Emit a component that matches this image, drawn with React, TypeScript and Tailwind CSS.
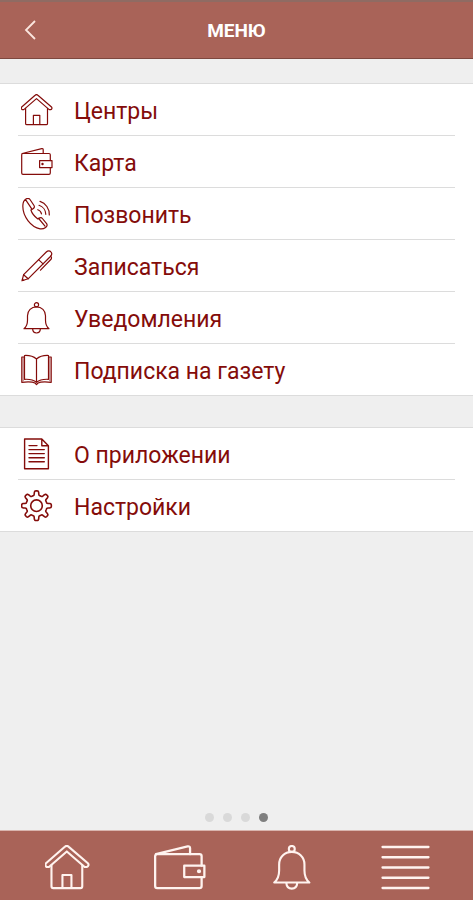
import type { ReactNode } from 'react';

type IconProps = { className?: string };

function Icon({ className = 'size-8 stroke-[1.2]', children }: IconProps & { children: ReactNode }) {
  return (
    <svg
      viewBox="0 0 32 32"
      fill="none"
      stroke="currentColor"
      strokeLinecap="round"
      strokeLinejoin="round"
      aria-hidden="true"
      className={className}
    >
      {children}
    </svg>
  );
}

function HouseIcon({ className }: IconProps) {
  return (
    <Icon className={className}>
      <path d="M14.1 1.3a2 2 0 0 1 2.8 0L30.5 13c.8.8.5 2.3-.7 2.6h-1.6L15.5 4.6 2.8 15.6H1.2C.1 15.1 0 13.8.7 13z" />
      <path d="M4.6 14.4v15c0 .8.5 1.3 1.3 1.3h19.3c.8 0 1.3-.5 1.3-1.3v-15M12.4 30.6v-9.3h6.4v9.3" />
    </Icon>
  );
}

function WalletIcon({ className, claspX = 21.5 }: IconProps & { claspX?: number }) {
  return (
    <Icon className={className}>
      <path d="M29.3 14.6V8.8c0-.8-.5-1.3-1.3-1.3H2c-.8 0-1.3.5-1.3 1.3v18.3c0 .8.5 1.3 1.3 1.3h26c.8 0 1.3-.5 1.3-1.3v-5.3" />
      <path d="M1.2 7.5 20.7 2.7c.9-.2 1.5.2 1.5 1.1v3.7" />
      <path d="M18.6 14.6H31v7H18.6z" />
      <circle cx={claspX} cy="18" r=".6" fill="currentColor" />
    </Icon>
  );
}

function PhoneIcon() {
  return (
    <Icon>
      <path d="M5 .9C6.5.1 8 .1 9 1.5l4 6c.8 1.2.3 2.5-.9 3.2L9.9 12c1.1 3.6 3.6 6.5 6.9 8.9l2-1c1-.5 1.9-.3 2.6.6l4.2 5.2c1 1.4.3 2.8-1 3.7-1.8 1.3-3.5 1.7-5.5 1.4-4.5-.8-8.5-3.5-12-8C3.3 17.8 1.5 12.5 1.9 7 2 4.2 2.8 2.2 5 .9z" />
      <path d="m3.6 2.3 1.3-.2 6 9M17.7 20.5l6.3 7.7" />
      <path d="M19 3.3c5.7 1.6 9.6 7.6 9.3 13.7M18 7.3c4 1.2 6.7 5 6.8 9M16.8 11.7c2 .6 3.3 2.2 3.7 4.2" />
    </Icon>
  );
}

function PenIcon() {
  return (
    <Icon>
      <path d="M1 30.8 2.6 24.7 25.3 2c1.7-1.7 3.5-1.5 4.6-.2 1.2 1.3 1.1 3-.5 4.7L7.1 28.8z" />
      <path d="m2.6 24.7 4.5 4.1M17.5 9.6l4.6 4.3M29.6 6.2c1.2.9 1.2 2.3.2 3.3L19.5 20.2" />
      <path d="m1.4 29.2 1.3 1.2" />
    </Icon>
  );
}

function BellIcon({ className }: IconProps) {
  return (
    <Icon className={className}>
      <circle cx="15.5" cy="2.8" r="2.1" />
      <path d="M3 26.7c2.5-2 3.5-5 3.5-8.5v-4.4c0-5.1 3.8-8.9 9-8.9s9 3.8 9 8.9v4.4c0 3.5 1 6.5 3.5 8.5zM11.6 26.9c.2 2.6 1.8 4.1 3.9 4.1s3.7-1.5 3.9-4.1" />
    </Icon>
  );
}

function BookIcon() {
  return (
    <Icon>
      <path d="M15.5 5C12.5 2.4 8 1.3 3.5 1.5v23.8c4.8-.3 9 .5 12 3 3-2.5 7.200-3.3 12-3V1.5c-4.500-.2-9 .9-12 3.5zv23.3" />
      <path d="M3.500 3H.8v25.300c5.300-.5 10.200-.8 13.200.7l1.500 1.600 1.500-1.600c3-1.500 7.900-1.200 13.200-.7V3h-2.700" />
      <path d="M2.200 3.500v23.400M28.800 3.500v23.400" className="stroke-[0.6]" />
    </Icon>
  );
}

function DocumentIcon() {
  return (
    <Icon className="size-8 stroke-[1.4]">
      <path d="M3.6 1h17.2l6.600 6.8v22.9H3.6zM20.800 1v6.8h6.600" />
      <path d="M8 7.600h8M8 11.600h15.300M8 15.600h15.300M8 19.700h15.300M8 23.700h15.300" />
    </Icon>
  );
}

// Eight rounded teeth, traced around the hub
const gearPoints = Array.from({ length: 160 }, (_, i) => {
  const angle = (i / 160) * Math.PI * 2;
  const radius = 12.7 + 2.2 * Math.tanh(2.8 * (Math.cos(8 * angle) - 0.15));
  return `${(15.5 + radius * Math.cos(angle)).toFixed(2)},${(15.7 + radius * Math.sin(angle)).toFixed(2)}`;
}).join(' ');

function GearIcon() {
  return (
    <Icon className="size-8 stroke-[1.6]">
      <polygon points={gearPoints} />
      <circle cx="15.5" cy="15.7" r="5.8" />
    </Icon>
  );
}

function LinesIcon({ className }: IconProps) {
  return (
    <Icon className={className}>
      <path d="M1 2.6h30M1 9.3h30M1 16h30M1 22.7h30M1 29.4h30" />
    </Icon>
  );
}

const sections = [
  [
    { label: 'Центры', icon: <HouseIcon /> },
    { label: 'Карта', icon: <WalletIcon /> },
    { label: 'Позвонить', icon: <PhoneIcon /> },
    { label: 'Записаться', icon: <PenIcon /> },
    { label: 'Уведомления', icon: <BellIcon /> },
    { label: 'Подписка на газету', icon: <BookIcon /> },
  ],
  [
    { label: 'О приложении', icon: <DocumentIcon /> },
    { label: 'Настройки', icon: <GearIcon /> },
  ],
];

const tabs = [
  { label: 'Центры', icon: <HouseIcon className="size-[45px] stroke-[1.5]" /> },
  { label: 'Карта', icon: <WalletIcon className="size-[52px] stroke-[1.4]" claspX={27.7} /> },
  { label: 'Уведомления', icon: <BellIcon className="size-[45px] stroke-[1.5]" /> },
  { label: 'Меню', icon: <LinesIcon className="size-[49px] stroke-[1.5]" /> },
];

export default function App() {
  return (
    <div className="flex min-h-screen flex-col bg-[#efefef] font-['Roboto',sans-serif]">
      <header className="grid h-[59px] grid-cols-[1fr_auto_1fr] items-center border-t-2 border-b border-t-[#8f6b63] border-b-[#7d483f] bg-[#a96358] text-white">
        <button type="button" aria-label="Назад" className="ml-5 flex size-8 items-center">
          <svg viewBox="0 0 22 22" fill="none" stroke="#fbe6df" strokeWidth="1.8" aria-hidden="true" className="size-[22px]">
            <path d="M15 2 6 11l9 9" />
          </svg>
        </button>
        <h1 className="pt-0.5 text-[19px] leading-6 font-bold">МЕНЮ</h1>
      </header>

      <main className="flex flex-1 flex-col gap-[31px] pt-6">
        {sections.map((items, index) => (
          <ul key={index} className="border-y border-[#dcdcdc] bg-white text-[#840c0a]">
            {items.map(({ label, icon }) => (
              <li key={label} className="group px-[18px]">
                <a
                  href="#"
                  className="flex h-[52px] items-center gap-[21px] border-b border-[#dcdcdc] pl-[3px] group-last:h-[51px] group-last:border-b-0"
                >
                  {icon}
                  <span className="pt-1 text-[23px] leading-7">{label}</span>
                </a>
              </li>
            ))}
          </ul>
        ))}
      </main>

      <div className="flex justify-center gap-[9px] py-2">
        <span className="size-[9px] rounded-full bg-[#d9d9d9]" />
        <span className="size-[9px] rounded-full bg-[#d9d9d9]" />
        <span className="size-[9px] rounded-full bg-[#d9d9d9]" />
        <span className="size-[9px] rounded-full bg-[#7f7f7f]" />
      </div>

      <nav className="grid h-[70px] grid-cols-4 border-t border-[#d9b5ae] bg-[#a96358] px-[11px] text-[#fff3ef]">
        {tabs.map(({ label, icon }) => (
          <a key={label} href="#" aria-label={label} className="flex items-center justify-center pt-1">
            {icon}
          </a>
        ))}
      </nav>
    </div>
  );
}
